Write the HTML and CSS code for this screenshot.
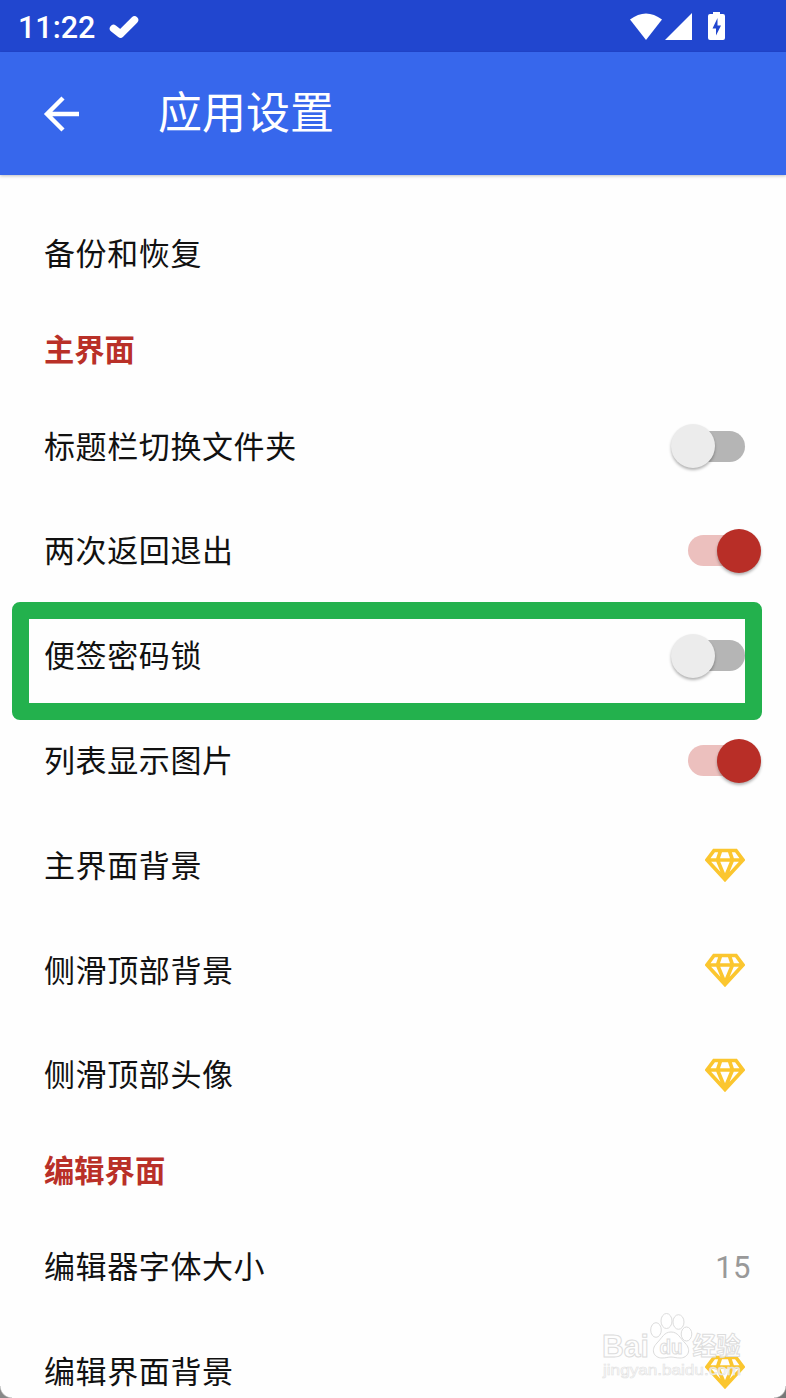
FILE: index.html
```html
<!doctype html>
<html lang="zh-CN">
<head>
<meta charset="utf-8">
<title>应用设置</title>
<link rel="stylesheet" href="styles.css">
</head>
<body>
<svg class="defs" width="0" height="0">
	<symbol id="gem" viewBox="0 0 40 34">
		<path d="M9 2.5H31L38 12L20 31.5L2 12Z M2 12H38 M15.5 3L12.5 12L20 30 M24.5 3L27.5 12L20 30" fill="none" stroke="#fbc62f" stroke-width="3.7" stroke-linejoin="miter"/>
	</symbol>
</svg>
<div class="screen">
	<div class="statusbar">
		<span class="clock">11:22</span>
		<svg class="check" width="30" height="24" viewBox="0 0 30 24"><path d="M4.5 13.5L11.5 19L25.5 5" fill="none" stroke="#fff" stroke-width="7.5" stroke-linecap="round" stroke-linejoin="round"/></svg>
		<svg class="signals" width="96" height="30" viewBox="0 0 96 30">
			<path d="M0 8.5Q16 -3.5 32 8.5L16 29Z" fill="#fff"/>
			<path d="M35 29L62 2V29Z" fill="#fff"/>
			<path d="M83 1H90V3H93Q95 3 95 5V27Q95 29 93 29H80Q78 29 78 27V5Q78 3 80 3H83Z" fill="#fff"/>
			<path d="M87.5 7L82.5 17.5H86V24.5L91 14.5H87.5Z" fill="#2146cf"/>
		</svg>
	</div>
	<div class="appbar">
		<svg class="back" width="38" height="36" viewBox="0 0 38 36"><path d="M36 18H4M20 2L4 18L20 34" fill="none" stroke="#fff" stroke-width="4.4"/></svg>
		<h1>应用设置</h1>
	</div>
	<div class="list">
		<div class="row"><span class="label">备份和恢复</span></div>
		<h2>主界面</h2>
		<div class="row"><span class="label">标题栏切换文件夹</span><i class="switch"></i></div>
		<div class="row"><span class="label">两次返回退出</span><i class="switch on"></i></div>
		<div class="row marked"><span class="label">便签密码锁</span><i class="switch"></i></div>
		<div class="row"><span class="label">列表显示图片</span><i class="switch on"></i></div>
		<div class="row"><span class="label">主界面背景</span><svg class="gem"><use href="#gem"/></svg></div>
		<div class="row"><span class="label">侧滑顶部背景</span><svg class="gem"><use href="#gem"/></svg></div>
		<div class="row"><span class="label">侧滑顶部头像</span><svg class="gem"><use href="#gem"/></svg></div>
		<h2>编辑界面</h2>
		<div class="row"><span class="label">编辑器字体大小</span><span class="value">15</span></div>
		<div class="row"><span class="label">编辑界面背景</span><svg class="gem"><use href="#gem"/></svg></div>
	</div>
	<svg class="watermark" width="150" height="76" viewBox="0 0 150 76">
		<g fill="#fff" fill-opacity=".75" stroke="#dcdcdc" stroke-width="1">
			<ellipse cx="55" cy="29" rx="5.3" ry="7.3"/>
			<ellipse cx="65.5" cy="20" rx="5.5" ry="7.5"/>
			<ellipse cx="77.5" cy="21" rx="5.5" ry="7.3"/>
			<ellipse cx="85.5" cy="33" rx="5.3" ry="7"/>
			<path d="M70 31C77 31 79 37 84 42C91 49 87 57 79 57C75 57 73 56 70 56C67 56 65 57 61 57C53 57 49 49 56 42C61 37 63 31 70 31Z"/>
			<text x="1" y="56" class="brand" textLength="47" lengthAdjust="spacingAndGlyphs">Bai</text>
			<text x="58.5" y="53" class="du" textLength="23" lengthAdjust="spacingAndGlyphs">du</text>
			<text x="91.5" y="54" class="jy" textLength="48" lengthAdjust="spacingAndGlyphs">经验</text>
		</g>
		<text x="2" y="74" class="url" textLength="138" lengthAdjust="spacingAndGlyphs">jingyan.baidu.com</text>
	</svg>
	<div class="corner left"></div>
	<div class="corner right"></div>
</div>
</body>
</html>
```
FILE: styles.css
```css
html, body{
	margin: 0;
	height: 100%;
}
body{
	background: #fefefe;
	color: #111;
	font-family: Roboto, "Noto Sans CJK SC", sans-serif;
}
.defs{
	position: absolute;
}
.screen{
	position: relative;
	width: 786px;
	height: 1398px;
	overflow: hidden;
}
.statusbar{
	display: flex;
	align-items: center;
	box-sizing: border-box;
	height: 52px;
	padding: 0 60px 0 18px;
	background: #2146cf;
	color: #fff;
}
.clock{
	width: 78px;
	font-size: 30.5px;
	font-weight: 500;
	padding-top: 2px;
}
.check{
	margin-left: 13px;
	margin-top: 1px;
}
.signals{
	margin-left: auto;
}
.appbar{
	display: flex;
	align-items: center;
	height: 123px;
	padding-left: 43px;
	background: #3767ec;
	box-shadow: 0 1px 3px rgba(0,0,0,0.25);
	color: #fff;
}
h1{
	margin: 0 0 0 77px;
	padding-top: 1px;
	font-size: 44px;
	font-weight: 400;
	line-height: 60px;
}
.list{
	padding-top: 26.6px;
}
.row{
	position: relative;
	display: flex;
	align-items: center;
	justify-content: space-between;
	height: 104.8px;
	padding: 0 41px 0 44px;
	font-size: 31px;
}
.label{
	padding-bottom: 4px;
	letter-spacing: 0.6px;
}
h2{
	box-sizing: border-box;
	margin: 0;
	padding: 1px 0 0 44px;
	height: 87.3px;
	line-height: 87.3px;
	font-size: 30.3px;
	font-weight: 700;
	color: #b93028;
}
.value{
	margin-right: -6px;
	padding-top: 2px;
	letter-spacing: 0.5px;
	color: #999;
}
.gem{
	width: 40px;
	height: 34px;
}
.switch{
	position: relative;
	width: 57px;
	height: 31px;
	border-radius: 16px;
	background: #b5b5b5;
}
.switch::after{
	content: "";
	position: absolute;
	left: -17px;
	top: -6.5px;
	width: 44px;
	height: 44px;
	border-radius: 50%;
	background: #ececec;
	box-shadow: 0 2px 3px rgba(0,0,0,0.3);
}
.switch.on{
	background: #ecc0be;
}
.switch.on::after{
	left: 29px;
	top: -6px;
	background: #b82e27;
}
/* green frame round the password lock row */
.marked::before{
	content: "";
	position: absolute;
	z-index: 1;
	left: 12px;
	top: -1px;
	width: 716px;
	height: 84px;
	border: 17px solid #23b14d;
	border-radius: 8px;
}
.watermark{
	position: absolute;
	left: 601px;
	top: 1301px;
	overflow: visible;
}
.brand, .du{
	font: bold 31px "Liberation Sans", sans-serif;
}
.du{
	font-size: 20px;
}
.jy{
	font: bold 25px "Noto Sans CJK SC", sans-serif;
}
.url{
	font: 15px "Liberation Sans", sans-serif;
	fill: #fff;
	fill-opacity: 0.75;
	stroke: #e2e2e2;
	stroke-width: 0.6px;
}
.corner{
	position: absolute;
	bottom: 0;
	width: 12px;
	height: 12px;
	background: radial-gradient(circle at 100% 0, transparent 11px, #888 12.5px);
}
.left{
	left: 0;
}
.right{
	right: 0;
	background: radial-gradient(circle at 0 0, transparent 11px, #777 12.5px);
}
```
